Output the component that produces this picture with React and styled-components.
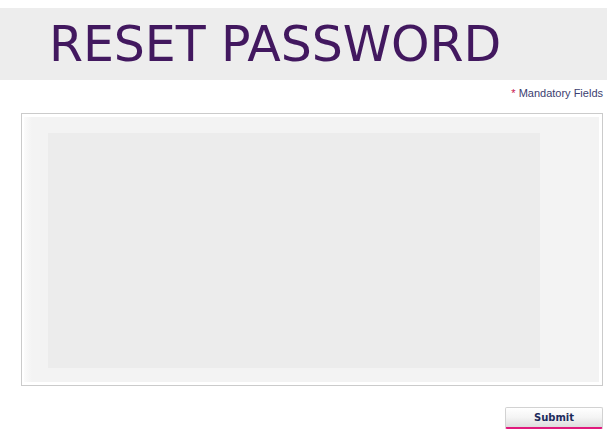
import React from "react";
import styled, { createGlobalStyle } from "styled-components";

const GlobalStyle = createGlobalStyle`
  body {
    margin: 0;
    background: #ffffff;
    font-family: "Liberation Sans", Arial, sans-serif;
  }
`;

const Page = styled.div`
  width: 607px;
  padding-top: 8px;
`;

const TitleBar = styled.div`
  height: 72px;
  background: #ededed;
  display: flex;
  align-items: center;
  padding-left: 49px;
`;

const Title = styled.h1`
  margin: 0;
  font-family: "DejaVu Sans", Verdana, sans-serif;
  font-weight: normal;
  font-size: 49px;
  letter-spacing: -0.1px;
  line-height: 1;
  color: #42185f;
`;

const NoteRow = styled.div`
  display: flex;
  justify-content: flex-end;
  align-items: center;
  height: 14px;
  margin-top: 6px;
  padding-right: 4px;
  font-size: 11px;
  color: #3b4070;
`;

const Star = styled.span`
  color: #c8104e;
  margin-right: 3px;
`;

const FormBox = styled.div`
  margin: 13px 4px 0 21px;
  border: 1px solid #cbcbcb;
  padding: 3px 3px 3px 2px;
`;

const Panel = styled.div`
  background: linear-gradient(to right, #fbfbfb 0px, #f3f3f3 8px, #f3f3f3 100%);
  padding: 16px 59px 14px 24px;
`;

const Fields = styled.div`
  height: 235px;
  background: #ececec;
`;

const Actions = styled.div`
  display: flex;
  justify-content: flex-end;
  margin-top: 21px;
  padding-right: 4px;
`;

const SubmitButton = styled.button`
  width: 98px;
  height: 22px;
  padding: 0;
  border: 1px solid #d2d2d2;
  border-bottom: 2px solid #e0197c;
  border-radius: 2px;
  background: linear-gradient(to bottom, #ffffff 0%, #f4f4f4 50%, #dddddd 100%);
  font-family: "DejaVu Sans", Verdana, sans-serif;
  font-weight: bold;
  font-size: 10px;
  color: #1d2b5c;
  cursor: pointer;
`;

const App = () => {
  return (
    <>
      <GlobalStyle />
      <Page>
        <TitleBar>
          <Title>RESET PASSWORD</Title>
        </TitleBar>
        <NoteRow>
          <Star>*</Star>Mandatory Fields
        </NoteRow>
        <FormBox>
          <Panel>
            <Fields />
          </Panel>
        </FormBox>
        <Actions>
          <SubmitButton>Submit</SubmitButton>
        </Actions>
      </Page>
    </>
  );
};

export default App;
